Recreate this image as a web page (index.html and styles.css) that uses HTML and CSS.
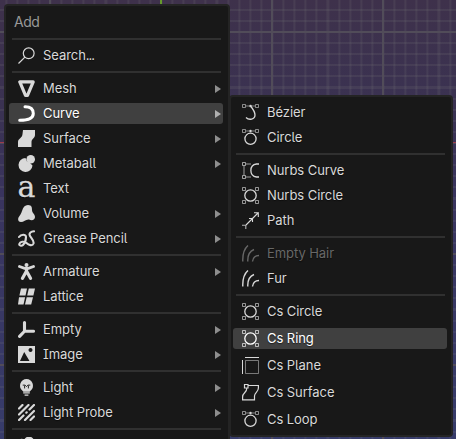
FILE: index.html
```
<!DOCTYPE html>
<html lang="en">
<head>
<meta charset="utf-8">
<title>Add</title>
<link rel="stylesheet" href="styles.css">
</head>
<body>
<svg class="defs" width="0" height="0" aria-hidden="true">
  <defs>
    <symbol id="search" viewBox="0 0 17 17"><g fill="none" stroke="currentColor" stroke-width="1.2"><circle cx="10.7" cy="6.3" r="5.4"/><path d="M6.9 10.1L.5 16.5"/></g></symbol>
    <symbol id="mesh" viewBox="0 0 17 17"><path d="M1.800 1.900H15.200L9.500 15.400H7.500Z" fill="none" stroke="currentColor" stroke-width="3.2" stroke-linejoin="round"/></symbol>
    <symbol id="curve" viewBox="0 0 17 17"><path d="M7 1.700C12 1.700 15.300 4 15.300 8.500S11 15.300 1.700 15.300" fill="none" stroke="currentColor" stroke-width="3" stroke-linecap="round"/></symbol>
    <symbol id="surface" viewBox="0 0 17 17"><path d="M5 0H17V5C17 8 13.500 9 13.500 12V17H0V12C0 8.500 4.500 8 4.500 4Z" fill="currentColor"/></symbol>
    <symbol id="meta" viewBox="0 0 17 17"><g fill="currentColor"><circle cx="12.700" cy="4.300" r="4.300"/><path d="M7.500 3A7 7 0 1 0 14.500 10.500L12 8L9 6.500Z"/></g></symbol>
    <symbol id="volume" viewBox="0 0 17 17"><path d="M10 0C14 0 14 3 14 5C14 8 17 9 17 12C17 15 14 16 11 14.500C8 14 6 17 3 17C0 17-.5 14 .8 12C2 10 3 9 4 6C5 2 7 0 10 0Z" fill="currentColor"/></symbol>
    <symbol id="grease" viewBox="0 0 17 17"><path d="M1 7C3 4.200 8 4 8 7C8 10 6.500 13.500 5 15C3.500 16.500 1 15.500 1.300 14C2 11.500 6 11 8.500 13C10.500 15 14.500 16.500 15.500 13.500C16.500 10 11.500 7 11.500 4.500C11.500 2.500 13.500 1.500 16 1.200" fill="none" stroke="currentColor" stroke-width="2.100" stroke-linecap="round"/></symbol>
    <symbol id="armature" viewBox="0 0 17 17"><g fill="none" stroke="currentColor" stroke-linecap="round"><path d="M1.500 3.500L6.500 5.300H10.500L15.500 3.500" stroke-width="2.800"/><path d="M8.500 5V8L4.500 15.300M8.500 8L12.500 15.300" stroke-width="3.200"/></g><circle cx="8.500" cy="2" r="2" fill="currentColor"/></symbol>
    <symbol id="lattice" viewBox="0 0 17 17"><path d="M3 .5H9L7.500 7.500H1.400ZM10.800.5H17L15.400 7.500H9.200ZM1 9.300H7.100L5.500 16.500H0ZM8.700 9.300H15L13.200 16.500H7Z" fill="currentColor"/></symbol>
    <symbol id="empty" viewBox="0 0 17 17"><path d="M6.500 1.600V10.200H15.500M6.500 10.200L1.600 15.400" fill="none" stroke="currentColor" stroke-width="3.100" stroke-linecap="round" stroke-linejoin="round"/></symbol>
    <symbol id="image" viewBox="0 0 17 17"><path fill-rule="evenodd" d="M0 0H17V17H0ZM2 15H11.500L6.200 6ZM12.500 2A2 2 0 1 0 12.510 2Z" fill="currentColor"/></symbol>
    <symbol id="light" viewBox="0 0 17 18"><path d="M8.500 0A7 7 0 0 0 4 12.200L5.200 13.500H11.800L13 12.200A7 7 0 0 0 8.500 0Z" fill="currentColor"/><path d="M4.500 6.500H7L8.500 8L10 6.500H12.500M6.500 7V10M10.500 7V10" stroke="#181818" fill="none"/><path d="M5 14.800H12M6.500 17H10.500" stroke="currentColor" stroke-width="1.300"/></symbol>
    <symbol id="probe" viewBox="0 0 17 17"><path d="M1 4.500L4.500 1M1 10.500L10.500 1M1 16L5.500 11.500M11.500 5.500L16 1M7 16L16 7M12.500 16L16 12.500M8.300 8.700L8.700 8.300" fill="none" stroke="currentColor" stroke-width="2.200" stroke-linecap="round"/></symbol>
    <symbol id="camera" viewBox="0 0 17 17"><g fill="currentColor"><circle cx="11" cy="4.500" r="5"/><circle cx="3.700" cy="4.800" r="3"/></g></symbol>
    <symbol id="handles" viewBox="0 0 17 17"><g fill="none" stroke="currentColor" opacity=".6"><path d="M.5.5H3.500V3.500H.5ZM13.500.5H16.500V3.500H13.500ZM4 2H7M10 2H13"/></g><circle cx="8.500" cy="2" r="1.300" fill="currentColor"/></symbol>
    <symbol id="bezier" viewBox="0 0 17 17"><use href="#handles"/><path d="M8.500 2C11 5 13 8 13 11C13 15.500 7 16.500 4 13.500" fill="none" stroke="currentColor" stroke-width="1.300"/></symbol>
    <symbol id="circle" viewBox="0 0 17 17"><use href="#handles"/><circle cx="8.500" cy="9.800" r="5.600" fill="none" stroke="currentColor" stroke-width="1.300"/></symbol>
    <symbol id="ncurve" viewBox="0 0 17 17"><g fill="none" stroke="currentColor"><path opacity=".7" d="M.5.5H3.500V3.500H.5ZM.5 13.500H3.500V16.500H.5ZM2 4V13M4 2H9M4 15H9"/><path d="M17 2H14.500C7 3 7 14 14.500 15H17" stroke-width="1.300"/></g></symbol>
    <symbol id="ncircle" viewBox="0 0 17 17"><g fill="none" stroke="currentColor"><path opacity=".65" d="M.5.5H3.500V3.500H.5ZM.5 13.500H3.500V16.500H.5ZM13.500.5H16.500V3.500H13.500ZM13.500 13.500H16.500V16.500H13.500Z"/><circle cx="8.500" cy="8.500" r="5.700" stroke-width="1.300"/></g></symbol>
    <symbol id="path" viewBox="0 0 17 17"><g fill="none" stroke="currentColor" stroke-width="1.100"><path d="M4 13L16.500.5M12 .8H16.300V5M7 6.500H10.500V10"/><path opacity=".8" d="M0 13.200H3.800V17"/></g></symbol>
    <symbol id="fur" viewBox="0 0 17 17"><path d="M.8 16.500C.5 10 2 4 6 .5M5.800 16.500C5.500 11 7 6.500 12 4.500M10.500 16.500C11 13 13 10.500 17 10.500" fill="none" stroke="currentColor" stroke-width="1.400"/></symbol>
    <symbol id="plane" viewBox="0 0 17 17"><g fill="none" stroke="currentColor"><path d="M3 .5H17M.5 3V17"/><path d="M3.500 3.500H16.500V16.500H3.500Z" opacity=".5"/></g></symbol>
    <symbol id="csurf" viewBox="0 0 17 17"><path d="M2.500.5H6V4H2.500ZM6 1.500H16.400V4C16.400 8 12.500 8.500 12.500 12V15.800H.6V13C.6 8.500 5 9 4.800 4" fill="none" stroke="currentColor" stroke-width="1.200"/></symbol>
  </defs>
</svg>
<div class="viewport">
  <nav class="menu main">
    <h1 class="title">Add</h1>
    <div class="sep"></div>
    <div class="row"><svg class="icon"><use href="#search"/></svg><span>Search<span class="dots">...</span></span></div>
    <div class="sep"></div>
    <div class="row sub"><svg class="icon"><use href="#mesh"/></svg>Mesh</div>
    <div class="row sub active"><svg class="icon"><use href="#curve"/></svg>Curve</div>
    <div class="row sub"><svg class="icon"><use href="#surface"/></svg>Surface</div>
    <div class="row sub"><svg class="icon"><use href="#meta"/></svg>Metaball</div>
    <div class="row"><span class="icon glyph">a</span>Text</div>
    <div class="row sub"><svg class="icon"><use href="#volume"/></svg>Volume</div>
    <div class="row sub"><svg class="icon"><use href="#grease"/></svg>Grease Pencil</div>
    <div class="sep"></div>
    <div class="row sub"><svg class="icon"><use href="#armature"/></svg>Armature</div>
    <div class="row"><svg class="icon"><use href="#lattice"/></svg>Lattice</div>
    <div class="sep"></div>
    <div class="row sub"><svg class="icon"><use href="#empty"/></svg>Empty</div>
    <div class="row sub"><svg class="icon"><use href="#image"/></svg>Image</div>
    <div class="sep"></div>
    <div class="row sub"><svg class="icon"><use href="#light"/></svg>Light</div>
    <div class="row sub"><svg class="icon"><use href="#probe"/></svg>Light Probe</div>
    <div class="sep"></div>
    <div class="row"><svg class="icon"><use href="#camera"/></svg></div>
  </nav>
  <nav class="menu side">
    <div class="row"><svg class="icon"><use href="#bezier"/></svg>Bézier</div>
    <div class="row"><svg class="icon"><use href="#circle"/></svg>Circle</div>
    <div class="sep"></div>
    <div class="row"><svg class="icon"><use href="#ncurve"/></svg>Nurbs Curve</div>
    <div class="row"><svg class="icon"><use href="#ncircle"/></svg>Nurbs Circle</div>
    <div class="row"><svg class="icon"><use href="#path"/></svg>Path</div>
    <div class="sep"></div>
    <div class="row disabled"><svg class="icon"><use href="#fur"/></svg>Empty Hair</div>
    <div class="row"><svg class="icon"><use href="#fur"/></svg>Fur</div>
    <div class="sep"></div>
    <div class="custom">
      <div class="row"><svg class="icon"><use href="#ncircle"/></svg>Cs Circle</div>
      <div class="row active"><svg class="icon"><use href="#ncircle"/></svg>Cs Ring</div>
      <div class="row"><svg class="icon"><use href="#plane"/></svg>Cs Plane</div>
      <div class="row"><svg class="icon"><use href="#csurf"/></svg>Cs Surface</div>
      <div class="row"><svg class="icon"><use href="#circle"/></svg>Cs Loop</div>
    </div>
  </nav>
</div>
</body>
</html>
```
FILE: styles.css
```
* { box-sizing: border-box; }
body { margin: 0; overflow: hidden; }
.defs { position: absolute; }
.viewport {
  display: flex;
  align-items: flex-start;
  width: 456px;
  height: 439px;
  padding: 4px 0 0 4px;
  overflow: hidden;
  font: 13px/21px Inter, "Liberation Sans", sans-serif;
  font-feature-settings: "cv05", "cv08";
  letter-spacing: -.06px;
  color: #d9d9d9;
  background:
    linear-gradient(#66992c, #66992c) 160px 0 / 2px 4px no-repeat,
    linear-gradient(#9c3b4c, #9c3b4c) 0 142px / 100% 1px no-repeat,
    repeating-linear-gradient(90deg, #514c59 0 2px, transparent 2px 111px) 49px 0 / 444px 100%,
    repeating-linear-gradient(#514c59 0 2px, transparent 2px 111px) 0 31px / 100% 444px,
    repeating-linear-gradient(90deg, #7777772c 0 2px, transparent 2px 11.1px) 49.400px 0 / 444px 100%,
    repeating-linear-gradient(#7777772c 0 2px, transparent 2px 11.1px) 0 31px / 100% 444px,
    linear-gradient(#3e314b, #3a3252 25%, #39345e 45%, #373c6b);
}
.menu {
  display: flex;
  flex: none;
  flex-direction: column;
  border: 2px solid #242424;
  border-radius: 4px;
  background: #181818;
}
.menu > * { flex: none; }
.main { width: 226px; padding: 1px 5px 1px 3px; height: 470px; }
.side { width: 224px; height: 342px; margin: 91px 0 0 -1px; padding: 3px 4px 3px 2px; }
.title {
  height: 28px;
  margin: 0;
  padding: 1px 0 0 5px;
  font-size: 14px;
  line-height: 28px;
  font-weight: 400;
  letter-spacing: -.5px;
  color: #989898;
}
.sep { height: 8px; padding: 3px 2px 0 3px; }
.sep::before { content: ""; display: block; height: 2px; background: #303030; }
.row {
  display: flex;
  align-items: center;
  gap: 8px;
  height: 21px;
  margin: 2px 0;
  padding: 0 2px 0 9px;
  border-radius: 3px;
  white-space: nowrap;
  text-shadow: 0 1px 1px #0008;
}
.dots { letter-spacing: -1px; }
.icon { width: 17px; height: 17px; flex: none; }
.glyph {
  display: flex;
  justify-content: center;
  font: 30px/14px "DejaVu Serif", serif;
  -webkit-text-stroke: .3px currentColor;
}
.sub::after {
  content: "";
  margin-left: auto;
  border: solid transparent;
  border-width: 4px 0 4px 6px;
  border-left-color: #8e8e8e;
}
.active { background: #404040; color: #fff; }
.active::after { border-left-color: #b0b0b0; }
.disabled { color: #686868; }
.custom { display: grid; gap: 6px; padding-top: 2px; }
.custom .row { margin: 0; }
```
